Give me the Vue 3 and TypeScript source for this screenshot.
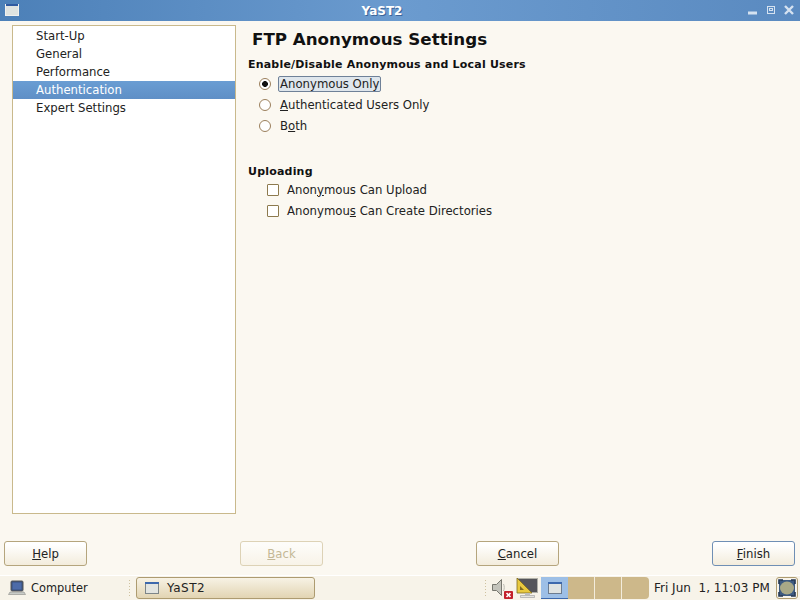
<template>
  <div class="desktop">
    <header class="titlebar">
      <svg class="titlebar__icon" width="16" height="14" viewBox="0 0 16 14">
        <rect x="0.5" y="0.5" width="13" height="11" fill="#dfe3e0" stroke="#f0f0ee" />
        <rect x="1" y="0" width="12" height="2" fill="#2f5aa0" />
      </svg>
      <span class="titlebar__title">YaST2</span>
      <div class="titlebar__controls">
        <svg class="titlebar__min" width="10" height="4" viewBox="0 0 10 4"><rect width="9" height="3" y="0.5" fill="#d5e2f0" /></svg>
        <svg width="8" height="8" viewBox="0 0 8 8"><rect x="0.5" y="0.5" width="7" height="7" fill="none" stroke="#d5e2f0" /><rect x="2.5" y="2.5" width="3" height="2" fill="none" stroke="#d5e2f0" /></svg>
        <svg width="10" height="10" viewBox="0 0 10 10"><path d="M1 1L9 9M9 1L1 9" stroke="#d5e2f0" stroke-width="2.4" /></svg>
      </div>
    </header>

    <main class="dialog">
      <div class="content">
        <ul class="tree">
          <li
            v-for="item in sections"
            :key="item"
            class="tree__item"
            :class="{ 'tree__item--selected': item === current }"
          >
            {{ item }}
          </li>
        </ul>

        <section class="panel">
          <h1 class="panel__title">FTP Anonymous Settings</h1>

          <h2 class="group-title">Enable/Disable Anonymous and Local Users</h2>
          <div class="options options--radio">
            <label v-for="opt in accessOptions" :key="opt.id" class="option">
              <span class="radio" :class="{ 'radio--on': opt.id === access }"></span>
              <span class="option__text" :class="{ 'option__text--focus': opt.id === access }">{{ opt.before }}<u v-if="opt.key">{{ opt.key }}</u>{{ opt.after }}</span>
            </label>
          </div>

          <h2 class="group-title group-title--upload">Uploading</h2>
          <div class="options options--check">
            <label v-for="opt in uploadOptions" :key="opt.id" class="option">
              <span class="check"></span>
              <span class="option__text option__text--check">{{ opt.before }}<u>{{ opt.key }}</u>{{ opt.after }}</span>
            </label>
          </div>
        </section>
      </div>

      <footer class="actions">
        <button type="button" class="btn"><u>H</u>elp</button>
        <button type="button" class="btn btn--disabled"><u>B</u>ack</button>
        <button type="button" class="btn"><u>C</u>ancel</button>
        <button type="button" class="btn btn--default"><u>F</u>inish</button>
      </footer>
    </main>

    <footer class="taskbar">
      <div class="menu">
        <svg width="18" height="18" viewBox="0 0 18 18">
          <rect x="3" y="2" width="12" height="10" rx="1" fill="#39507f" stroke="#555" />
          <rect x="4.5" y="3.5" width="9" height="7" fill="#4d6ba8" />
          <path d="M2 13h14l1.5 2.5H0.5z" fill="#c9ccc8" stroke="#8a8c88" stroke-width="0.6" />
        </svg>
        <span>Computer</span>
      </div>
      <span class="grip"></span>
      <div class="window-btn">
        <svg width="16" height="14" viewBox="0 0 16 14">
          <rect x="1.5" y="1.5" width="13" height="11" fill="#e2e4e0" stroke="#7d8588" />
          <rect x="1" y="1" width="14" height="2" fill="#3c68ad" />
        </svg>
        <span class="window-btn__label">YaST2</span>
      </div>
      <span class="grip grip--tray"></span>
      <div class="tray">
        <span class="speaker">
          <svg width="22" height="22" viewBox="0 0 22 22">
            <path d="M1.5 7.5h4l5-5v16l-5-5h-4z" fill="#c4c4bc" stroke="#77776f" />
            <path d="M12.5 7c1 2 1 5 0 7" fill="none" stroke="#b8b8b0" />
            <rect x="13" y="14" width="9" height="8" rx="1" fill="#c3202a" />
            <path d="M15.5 16l4 4M19.5 16l-4 4" stroke="#fff" stroke-width="1.6" />
          </svg>
        </span>
        <svg width="24" height="23" viewBox="0 0 24 23">
          <rect x="1.5" y="1.5" width="20" height="14" fill="#55555a" stroke="#b0b0a8" />
          <path d="M1 1l15 15H1z" fill="#e8c93f" stroke="#7d6a20" stroke-width="0.8" />
          <path d="M4 9l4 4H4z" fill="#7d6a20" />
          <path d="M9 16h5v2H9z" fill="#bbb" />
          <path d="M4.5 18.5h14v2h-14z" fill="#e4e4e0" stroke="#999" stroke-width="0.6" />
        </svg>
      </div>
      <div class="pager">
        <span class="pager__cell pager__cell--active">
          <svg width="16" height="14" viewBox="0 0 16 14">
            <rect x="1.5" y="1.5" width="13" height="11" fill="#dfe3e2" stroke="#6c7c90" />
            <rect x="1" y="1" width="14" height="2" fill="#3c68ad" />
          </svg>
        </span>
        <span class="pager__cell"></span>
        <span class="pager__cell"></span>
        <span class="pager__cell"></span>
      </div>
      <span class="clock">Fri Jun &nbsp;1, 11:03 PM</span>
      <span class="show-desktop">
        <svg width="18" height="18" viewBox="0 0 18 18">
          <rect x="1" y="1" width="16" height="16" rx="2" fill="#3d5a80" />
          <ellipse cx="9" cy="9" rx="7" ry="6.5" fill="#a9a987" />
          <path d="M1 5V1h4M13 1h4v4M1 13v4h4M17 13v4h-4" fill="none" stroke="#233652" stroke-width="1.6" />
        </svg>
      </span>
    </footer>
  </div>
</template>

<script setup lang="ts">
type LabelParts = {
  id: string
  before: string
  key: string
  after: string
}

const sections = ['Start-Up', 'General', 'Performance', 'Authentication', 'Expert Settings']
const current = 'Authentication'
const access = 'anon'

const accessOptions: LabelParts[] = [
  { id: 'anon', before: 'Anonymous Only', key: '', after: '' },
  { id: 'auth', before: '', key: 'A', after: 'uthenticated Users Only' },
  { id: 'both', before: 'B', key: 'o', after: 'th' },
]

const uploadOptions: LabelParts[] = [
  { id: 'upload', before: 'Anon', key: 'y', after: 'mous Can Upload' },
  { id: 'dirs', before: 'Anonymou', key: 's', after: ' Can Create Directories' },
]
</script>

<style>
body {
  margin: 0;
  background: #fbf8f1;
}
</style>

<style scoped>
.desktop {
  width: 800px;
  height: 600px;
  display: flex;
  flex-direction: column;
  overflow: hidden;
  background: #fbf8f1;
  color: #222;
  font-family: "DejaVu Sans", sans-serif;
  font-size: 11.7px;
}

.titlebar {
  position: relative;
  flex: 0 0 21px;
  height: 21px;
  display: flex;
  align-items: center;
  justify-content: center;
  box-sizing: border-box;
  padding-right: 36px;
  background: linear-gradient(90deg, #4c80b8, #6b9bcf 50%, #5a8ac0);
  color: #fff;
}

.titlebar__icon {
  position: absolute;
  left: 5px;
  top: 4px;
}

.titlebar__title {
  font-weight: bold;
  font-size: 12px;
  text-shadow: 1px 1px 0 #3c659a;
}

.titlebar__controls {
  position: absolute;
  right: 6px;
  top: 5px;
  display: flex;
  align-items: center;
  gap: 9px;
}

.titlebar__min {
  margin-top: 6px;
}

.dialog {
  flex: 0 0 auto;
  display: flex;
  flex-direction: column;
}

.content {
  display: flex;
  height: 489px;
  margin: 4px 0 0 12px;
}

.tree {
  box-sizing: border-box;
  width: 224px;
  height: 489px;
  margin: 0;
  padding: 1px 0 0;
  list-style: none;
  background: #fff;
  border: 1px solid #c9b98c;
}

.tree__item {
  height: 18px;
  line-height: 18px;
  padding-left: 23px;
  white-space: nowrap;
}

.tree__item--selected {
  background: linear-gradient(#6a9dd3, #5f8fc6);
  color: #fff;
}

.panel {
  padding-left: 12px;
}

.panel__title {
  margin: 3px 0 0 4px;
  font-size: 16.7px;
  line-height: 22px;
  font-weight: bold;
  color: #111;
}

.group-title {
  margin: 7px 0 0;
  font-size: 11px;
  line-height: 16px;
  font-weight: bold;
  letter-spacing: 0.2px;
  color: #111;
}

.group-title--upload {
  margin-top: 28px;
  line-height: 15px;
}

.options {
  display: flex;
  flex-direction: column;
}

.option {
  display: flex;
  align-items: center;
  height: 21px;
  white-space: nowrap;
}

.options--radio {
  padding-left: 11px;
}

.options--check {
  padding-left: 19px;
}

.radio {
  box-sizing: border-box;
  width: 12px;
  height: 12px;
  margin-right: 8px;
  border-radius: 50%;
  border: 1px solid #9b7f5c;
  background: #fff;
}

.radio--on {
  background: radial-gradient(circle, #111 0 2.6px, #fff 3.2px);
}

.option__text {
  padding: 0 0 0 1px;
}

.option__text--focus {
  margin: 0 0 0 -1px;
  padding: 0 1px;
  border: 1px solid #6f8198;
  border-radius: 2px;
  background: #dfe6ec;
  line-height: 14px;
}

.option__text--check {
  padding-left: 4px;
}

.check {
  box-sizing: border-box;
  width: 12px;
  height: 12px;
  margin-right: 4px;
  border: 1px solid #8d7a4e;
  border-radius: 1px;
  background: #fff;
}

.actions {
  display: flex;
  justify-content: space-between;
  margin-top: 27px;
  padding: 0 5px 0 4px;
}

.btn {
  box-sizing: border-box;
  width: 83px;
  height: 25px;
  padding: 0;
  border: 1px solid #b5a57d;
  border-radius: 3px;
  background: linear-gradient(#ffffff 10%, #f3ecdc);
  color: #222;
  font: 11.7px "DejaVu Sans", sans-serif;
}

.btn--disabled {
  border-color: #ddd2b6;
  background: linear-gradient(#fdfcf9 10%, #f8f3e8);
  color: #c4b896;
}

.btn--default {
  border-color: #6f8fb5;
}

.taskbar {
  box-sizing: border-box;
  flex: 0 0 25px;
  height: 25px;
  display: flex;
  align-items: center;
  margin-top: 9px;
  border-top: 1px solid #fff;
  background: #f7f3e9;
}

.menu {
  display: flex;
  align-items: center;
  gap: 5px;
  width: 128px;
  padding-left: 8px;
  box-sizing: border-box;
}

.menu span {
  font-size: 11.4px;
}

.grip {
  width: 4px;
  height: 18px;
  margin-right: 4px;
  background-image: radial-gradient(circle, #cfc29f 0.7px, transparent 0.8px);
  background-size: 3px 3px;
}

.window-btn {
  box-sizing: border-box;
  display: flex;
  align-items: center;
  gap: 7px;
  width: 179px;
  height: 22px;
  padding-left: 7px;
  border: 1px solid #ad9b70;
  border-radius: 3px;
  background: linear-gradient(#f7f2e5, #e2d4b3);
}

.window-btn__label {
  font-size: 12px;
  letter-spacing: 0.5px;
}

.grip--tray {
  margin-left: 169px;
  margin-right: 3px;
}

.tray {
  display: flex;
  align-items: center;
  gap: 3px;
}

.speaker {
  display: flex;
}

.pager {
  display: flex;
  height: 22px;
  margin-left: 1px;
  border-radius: 0 4px 4px 0;
  overflow: hidden;
  background: #cdb88a;
}

.pager__cell {
  box-sizing: border-box;
  width: 27px;
  display: flex;
  align-items: center;
  justify-content: center;
  border-right: 1px solid #f3ecdc;
}

.pager__cell:last-child {
  border-right: 0;
}

.pager__cell--active {
  background: #9dbfe6;
  border-right: 0;
  border-bottom: 1px solid #3c68ad;
}

.clock {
  margin-left: 5px;
  font-size: 12px;
  white-space: nowrap;
}

.show-desktop {
  box-sizing: border-box;
  display: flex;
  align-items: center;
  justify-content: center;
  width: 22px;
  height: 22px;
  margin-left: 6px;
  border: 1px solid #ad9b70;
  border-radius: 3px;
}
</style>
